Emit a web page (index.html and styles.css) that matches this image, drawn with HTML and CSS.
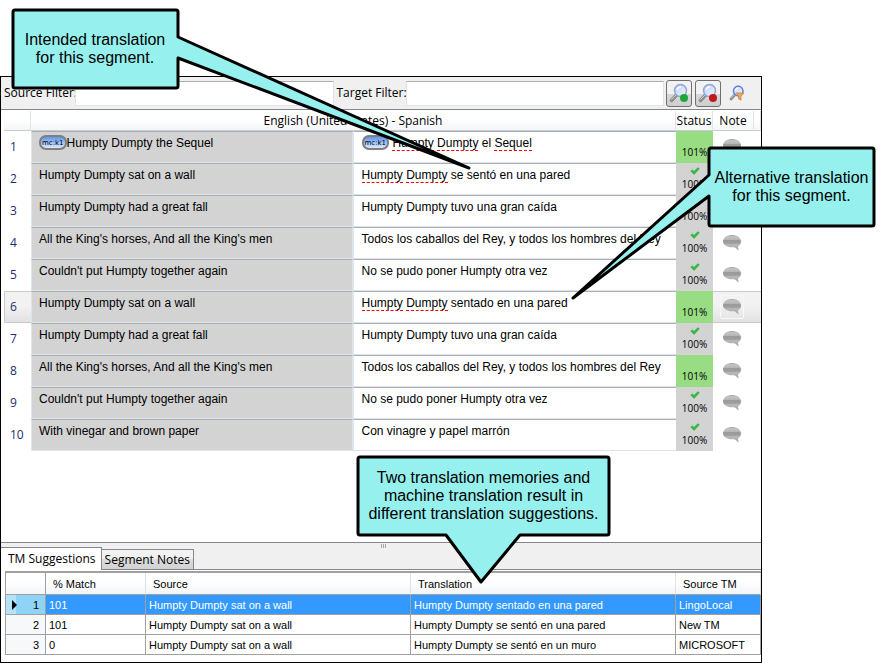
FILE: index.html
```
<!DOCTYPE html>
<html lang="en">
<head>
<meta charset="utf-8">
<title>Translation grid</title>
<link rel="stylesheet" href="styles.css">
</head>
<body>
<svg class="defs" aria-hidden="true">
  <defs>
    <linearGradient id="glass" x1="0" y1="0" x2="1" y2="1"><stop offset="0" stop-color="#b9cdf5"/><stop offset="1" stop-color="#f4f8ff"/></linearGradient>
    <linearGradient id="bubble" x1="0" y1="0" x2="0" y2="1"><stop offset="0" stop-color="#a8a8a8"/><stop offset=".12" stop-color="#c2c2c2"/><stop offset=".32" stop-color="#b4b4b4"/><stop offset=".36" stop-color="#989898"/><stop offset=".55" stop-color="#a2a2a2"/><stop offset=".6" stop-color="#b8b8b8"/><stop offset="1" stop-color="#aaaaaa"/></linearGradient>
    <symbol id="lens" viewBox="0 0 20 20">
      <path d="M2.500 17.500 8 11.500" stroke="#8d8d8d" stroke-width="3.500" stroke-linecap="round"/>
      <path d="M2.500 16.500 7.500 11.500" stroke="#d0d0d0" stroke-width="1"/>
      <circle cx="11.500" cy="7.500" r="6" fill="url(#glass)" stroke="#8fa6d8" stroke-width="1.500"/>
      <path d="M8 7a4 4 0 0 1 4-3" fill="none" stroke="#fff" stroke-width="1.500"/>
    </symbol>
    <symbol id="note" viewBox="0 0 20 18">
      <path d="M10 1C15 1 19 3.600 19 7.300c0 2.400-1 4-3 5l.600 4.200-4.100-3.200H10C5 13.300 1 11 1 7.300S5 1 10 1z" fill="url(#bubble)"/>
    </symbol>
    <symbol id="check" viewBox="0 0 10 8">
      <path d="M.300 4.300 2.300 2.500 4 4 7.800.300 9.700 1.700 4.200 7.700z" fill="#35b845"/>
    </symbol>
  </defs>
</svg>

<main class="app">
  <form class="filters">
    <label for="source-filter">Source Filter:</label>
    <input id="source-filter" type="text">
    <label for="target-filter">Target Filter:</label>
    <input id="target-filter" type="text">
    <div class="tools">
      <button type="button" class="tool" aria-label="Apply filter"><svg class="tool-icon"><use href="#lens"/><circle cx="15" cy="15" r="4" fill="#1fa838"/></svg></button>
      <button type="button" class="tool" aria-label="Clear filter"><svg class="tool-icon"><use href="#lens"/><circle cx="15" cy="15" r="4" fill="#c01a1a"/></svg></button>
      <button type="button" class="tool plain" aria-label="Filter options"><svg class="tool-icon small" viewBox="0 0 20 20"><use href="#lens"/><circle cx="11.500" cy="7.500" r="6" fill="none" stroke="#5c80dc" stroke-width="1.500"/><path d="M8.500 10h10l-3.500 4v5l-3-1.500V14z" fill="#f0a860" stroke="#c98442"/></svg></button>
    </div>
  </form>

  <section class="editor">
    <table class="segments">
      <colgroup><col class="c-num"><col><col><col class="c-status"><col class="c-note"><col class="c-end"></colgroup>
      <thead>
        <tr><th></th><th colspan="2">English (United States) - Spanish</th><th>Status</th><th>Note</th><th></th></tr>
      </thead>
      <tbody>
        <tr><th>1</th><td class="src"><span class="tag">mc:k1</span>Humpty Dumpty the Sequel</td><td class="tgt"><span class="tag">mc:k1</span> <u>Humpty</u> <u>Dumpty</u> el <u>Sequel</u></td><td class="status full">101%</td><td class="note"><svg><use href="#note"/></svg></td><td></td></tr>
        <tr><th>2</th><td class="src">Humpty Dumpty sat on a wall</td><td class="tgt"><u>Humpty</u> <u>Dumpty</u> se sentó en una pared</td><td class="status"><svg><use href="#check"/></svg>100%</td><td class="note"><svg><use href="#note"/></svg></td><td></td></tr>
        <tr><th>3</th><td class="src">Humpty Dumpty had a great fall</td><td class="tgt">Humpty Dumpty tuvo una gran caída</td><td class="status"><svg><use href="#check"/></svg>100%</td><td class="note"><svg><use href="#note"/></svg></td><td></td></tr>
        <tr><th>4</th><td class="src">All the King's horses, And all the King's men</td><td class="tgt">Todos los caballos del Rey, y todos los hombres del Rey</td><td class="status"><svg><use href="#check"/></svg>100%</td><td class="note"><svg><use href="#note"/></svg></td><td></td></tr>
        <tr><th>5</th><td class="src">Couldn't put Humpty together again</td><td class="tgt">No se pudo poner Humpty otra vez</td><td class="status"><svg><use href="#check"/></svg>100%</td><td class="note"><svg><use href="#note"/></svg></td><td></td></tr>
        <tr class="current"><th>6</th><td class="src">Humpty Dumpty sat on a wall</td><td class="tgt"><u>Humpty</u> <u>Dumpty</u> sentado en una pared</td><td class="status full">101%</td><td class="note"><svg><use href="#note"/></svg></td><td></td></tr>
        <tr><th>7</th><td class="src">Humpty Dumpty had a great fall</td><td class="tgt">Humpty Dumpty tuvo una gran caída</td><td class="status"><svg><use href="#check"/></svg>100%</td><td class="note"><svg><use href="#note"/></svg></td><td></td></tr>
        <tr><th>8</th><td class="src">All the King's horses, And all the King's men</td><td class="tgt">Todos los caballos del Rey, y todos los hombres del Rey</td><td class="status full">101%</td><td class="note"><svg><use href="#note"/></svg></td><td></td></tr>
        <tr><th>9</th><td class="src">Couldn't put Humpty together again</td><td class="tgt">No se pudo poner Humpty otra vez</td><td class="status"><svg><use href="#check"/></svg>100%</td><td class="note"><svg><use href="#note"/></svg></td><td></td></tr>
        <tr><th>10</th><td class="src">With vinegar and brown paper</td><td class="tgt">Con vinagre y papel marrón</td><td class="status"><svg><use href="#check"/></svg>100%</td><td class="note"><svg><use href="#note"/></svg></td><td></td></tr>
      </tbody>
    </table>
  </section>

  <div class="tabs">
    <button type="button" class="tab active">TM Suggestions</button>
    <button type="button" class="tab">Segment Notes</button>
    <span class="grip"></span>
  </div>

  <section class="memory">
    <table class="matches">
      <colgroup><col class="m-num"><col class="m-match"><col class="m-text"><col class="m-text"><col></colgroup>
      <thead>
        <tr><th></th><th>% Match</th><th>Source</th><th>Translation</th><th>Source TM</th></tr>
      </thead>
      <tbody>
        <tr class="selected"><th><span class="row-head"><svg viewBox="0 0 5 10"><path d="M0 0 5 5 0 10z"/></svg>1</span></th><td>101</td><td>Humpty Dumpty sat on a wall</td><td>Humpty Dumpty sentado en una pared</td><td>LingoLocal</td></tr>
        <tr><th>2</th><td>101</td><td>Humpty Dumpty sat on a wall</td><td>Humpty Dumpty se sentó en una pared</td><td>New TM</td></tr>
        <tr><th>3</th><td>0</td><td>Humpty Dumpty sat on a wall</td><td>Humpty Dumpty se sentó en un muro</td><td>MICROSOFT</td></tr>
      </tbody>
    </table>
  </section>
</main>

<aside class="callout intended">
  <svg viewBox="0 0 462 164"><path d="M4 2H165a2 2 0 0 1 2 2V29L458 160 167 50V78a2 2 0 0 1-2 2H4a2 2 0 0 1-2-2V4a2 2 0 0 1 2-2z"/></svg>
  <p>Intended translation<br>for this segment.</p>
</aside>
<aside class="callout alternative">
  <svg viewBox="0 0 305 154"><path d="M140 2H301a2 2 0 0 1 2 2V78a2 2 0 0 1-2 2H140a2 2 0 0 1-2-2V50L2 152 138 29V4a2 2 0 0 1 2-2z"/></svg>
  <p>Alternative translation<br>for this segment.</p>
</aside>
<aside class="callout memories">
  <svg viewBox="0 0 256 130"><path d="M4 2H251a2 2 0 0 1 2 2V78a2 2 0 0 1-2 2H164L125 127 90 80H4a2 2 0 0 1-2-2V4a2 2 0 0 1 2-2z"/></svg>
  <p>Two translation memories and<br>machine translation result in<br>different translation suggestions.</p>
</aside>
</body>
</html>
```
FILE: styles.css
```
* { box-sizing: border-box; }

body {
  margin: 0;
  position: relative;
  background: #fff;
  color: #000;
  font: 12px/16px "Open Sans", "Noto Sans", sans-serif;
}

.defs { position: absolute; width: 0; height: 0; }

button, input { font: inherit; color: inherit; margin: 0; }

.app {
  margin: 76px 122px 0 0;
  border: 1px solid #000;
  background: #fff;
}

/* Filter bar */
.filters {
  display: grid;
  grid-template-columns: 71px 1fr 72px 1fr auto;
  align-items: center;
  height: 33px;
  padding-left: 3px;
  background: #f0f0f0;
  border-bottom: 1px solid #828790;
  white-space: nowrap;
}

.filters input {
  width: 100%;
  min-width: 0;
  height: 25px;
  padding: 0 4px;
  background: #fff;
  border: 1px solid #e2e3ea;
  border-top-color: #abadb3;
}

.filters input + label { padding-left: 3px; }

.tools { display: flex; align-items: center; gap: 3px; padding: 0 11px 0 2px; }

.tool {
  display: flex;
  align-items: center;
  justify-content: center;
  width: 26px;
  height: 27px;
  padding: 0;
  border: 1px solid #707070;
  border-radius: 3px;
  background: linear-gradient(#f2f2f2 50%, #d8d8d8 50%, #cfcfcf);
}

.tool.plain { border: 0; background: none; }
.tool-icon { width: 20px; height: 20px; }
.tool-icon.small { width: 16px; height: 16px; }

/* Segment grid */
.editor {
  min-height: 433px;
  padding: 1px 0 0 3px;
  border-bottom: 1px solid #828790;
}

table { width: 100%; table-layout: fixed; border-collapse: separate; border-spacing: 0; }
th, td { padding: 0; font-weight: 400; white-space: nowrap; }

.c-num { width: 27px; }
.c-status { width: 37px; }
.c-note { width: 41px; }
.c-end { width: 7px; }

.segments thead th {
  height: 20px;
  background: linear-gradient(#fff 40%, #f5f6f8);
  border-right: 1px solid #e0e3e8;
  border-bottom: 1px solid #c8ccd2;
}

.segments tbody tr { height: 32px; }
.segments tbody th { padding-left: 6px; color: #1a2f6e; text-align: left; }

.src, .tgt {
  height: 32px;
  padding: 3px 0 0 7px;
  font: 12px/16px "Liberation Sans", Arial, sans-serif;
  vertical-align: top;
  border-top: 1px solid #a9aeb6;
  border-bottom: 1px solid #dfe4ec;
}

.src { background: #d3d3d3; border-left: 1px solid #dfe4ec; border-right: 2px solid #dfe4ec; }
.tgt { padding-left: 8px; }

.tgt u {
  text-decoration: none;
  border-bottom: 1px dashed #f00000;
}

.tag {
  display: inline-block;
  height: 15px;
  padding: 0 1px;
  border: 2px solid #7f7f7f;
  border-radius: 7px;
  background: linear-gradient(#5f96ee, #dce9ff);
  font: 7px/12px "DejaVu Sans", sans-serif;
  vertical-align: top;
}

.status {
  background: #d3d3d3;
  font-size: 10px;
  line-height: 12px;
  text-align: center;
  vertical-align: bottom;
  padding-bottom: 5px;
}

.status svg { display: block; width: 10px; height: 8px; margin: 0 auto 3px; }
.status.full { background: #98dc84; }

.note { padding-left: 7px; vertical-align: middle; }
.note svg { display: block; width: 24px; height: 24px; padding: 2px 1px; border: 1px solid transparent; border-radius: 2px; }

.current th, .current .note, .current td:last-child {
  background: linear-gradient(#f2f2f2 45%, #e2e2e2);
  border-top: 1px solid #c8c8c8;
  border-bottom: 1px solid #c8c8c8;
}

.current th { border-left: 1px solid #c8c8c8; border-radius: 2px 0 0 2px; }
.segments .current th { padding-left: 5px; }
.current .note svg { border-color: #f8f8f8; }

/* Tabs */
.tabs {
  display: flex;
  align-items: flex-end;
  position: relative;
  height: 27px;
  background: #f0f0f0;
  border-bottom: 1px solid #828790;
}

.tab {
  height: 20px;
  padding: 0 3px;
  border: 1px solid #828790;
  border-bottom: 0;
  border-left: 0;
  background: linear-gradient(#f2f2f2 50%, #dcdcdc 50%, #d2d2d2);
}

.tab.active { height: 23px; margin-bottom: -1px; padding: 0 5px 0 7px; background: #fff; }

.grip {
  position: absolute;
  top: 1px;
  left: 50%;
  width: 5px;
  height: 4px;
  background: repeating-linear-gradient(90deg, #a8a8a8 0 1px, transparent 1px 2px);
}

/* Translation memory matches */
.memory { padding: 1px 0 7px 4px; }

.matches {
  font: 11px/16px "Liberation Sans", Arial, sans-serif;
  border-top: 2px solid #a0a0a0;
  border-left: 1px solid #a0a0a0;
}

.m-num { width: 40px; }
.m-match { width: 100px; }
.m-text { width: 265px; }

.matches th, .matches td { height: 20px; border-right: 1px solid #a0a0a0; border-bottom: 1px solid #a0a0a0; text-align: left; }
.matches thead th { height: 22px; padding-left: 7px; background: linear-gradient(#fff 40%, #f2f4f6); border-right-color: #dfe2e6; }
.matches thead th:first-child { border-right-color: #a0a0a0; }
.matches td { padding-left: 3px; }
.matches tbody th { padding-right: 6px; text-align: right; background: #f7f8fa; }
.matches .selected td { background: #3399ff; color: #fff; }
.matches .selected th { background: linear-gradient(90deg, #b4e3f8 10px, #8fd4f6 10px); }
.row-head { display: flex; align-items: center; justify-content: space-between; padding-left: 6px; }
.row-head svg { width: 5px; height: 10px; }

/* Callouts float over the grid */
.callout { position: absolute; height: 82px; display: flex; align-items: center; justify-content: center; }
.callout svg { position: absolute; top: 0; fill: #96f0ee; stroke: #000; stroke-width: 3; stroke-linejoin: round; }
.callout p { position: relative; margin: 0; font: 16px/18px "Liberation Sans", Arial, sans-serif; text-align: center; white-space: nowrap; }

.intended { top: 8px; left: 11px; width: 168px; }
.intended svg { left: 0; width: 462px; height: 164px; }
.alternative { top: 146px; left: 707px; width: 169px; }
.alternative svg { right: 0; width: 305px; height: 154px; }
.memories { top: 455px; left: 356px; width: 255px; }
.memories svg { left: 0; width: 256px; height: 130px; }
```
